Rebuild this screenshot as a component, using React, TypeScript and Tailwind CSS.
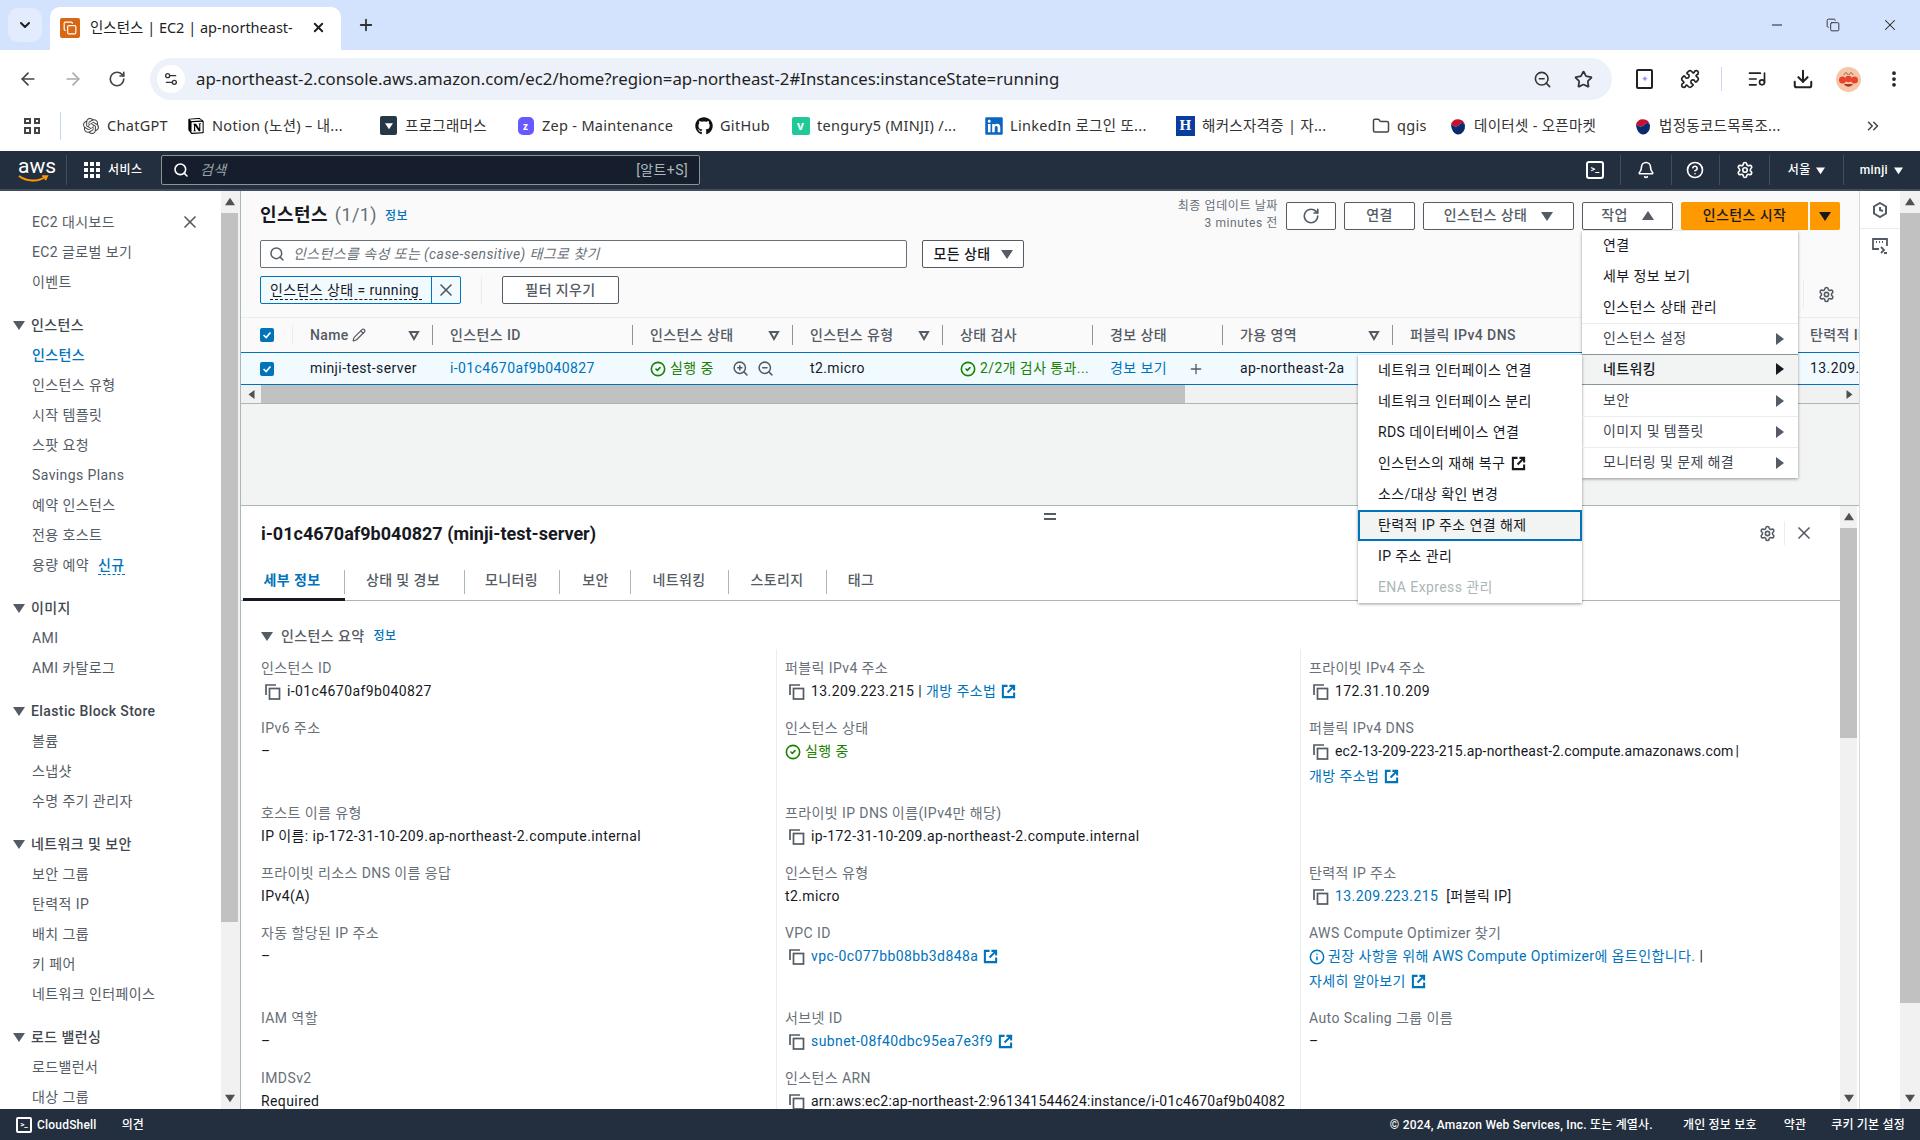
import { ReactNode } from "react";
import {
  ArrowLeft,
  ArrowRight,
  Bell,
  ChevronDown,
  ChevronsRight,
  CircleCheck,
  CircleHelp,
  Copy,
  Download,
  Folder,
  Info,
  ListMusic,
  Minus,
  MoreVertical,
  Pencil,
  Plus,
  Puzzle,
  RotateCw,
  Search,
  Settings,
  Settings2,
  Star,
  X,
  ZoomIn,
  ZoomOut,
} from "lucide-react";
import { FaGithub, FaLinkedin } from "react-icons/fa";
import { SiNotion, SiOpenai } from "react-icons/si";

const ui = "font-['Roboto','Noto_Sans_CJK_KR',sans-serif] tracking-[0.4px]";
const chromeFont = "font-['Noto_Sans','Noto_Sans_CJK_KR',sans-serif]";

function Tri({ dir = "down", className = "" }: { dir?: "down" | "up" | "left" | "right"; className?: string }) {
  const pts = {
    down: "0,2 12,2 6,11",
    up: "0,10 12,10 6,1",
    left: "10,0 10,12 2,6",
    right: "2,0 2,12 10,6",
  }[dir];
  return (
    <svg viewBox="0 0 12 12" className={className} fill="currentColor">
      <polygon points={pts} />
    </svg>
  );
}

function FilterTri() {
  return (
    <svg viewBox="0 0 12 12" className="w-3 h-3 text-[#545b64]" fill="none" stroke="currentColor" strokeWidth="2">
      <polygon points="2,3 10,3 6,10" />
    </svg>
  );
}

function CopyIcon() {
  return (
    <svg viewBox="0 0 16 16" className="w-4 h-4 shrink-0 text-[#545b64]" fill="none" stroke="currentColor" strokeWidth="1.7">
      <path d="M1 11V1h10" />
      <rect x="4.5" y="4.5" width="10" height="10.5" />
    </svg>
  );
}

function ExtIcon({ className = "text-[#0073bb]" }: { className?: string }) {
  return (
    <svg viewBox="0 0 16 16" className={`w-[15px] h-[15px] inline-block shrink-0 ${className}`} fill="none" stroke="currentColor" strokeWidth="2.2">
      <path d="M7 2H2v12h12V9" />
      <path d="M9 2h5v5M14 2L7 9" />
    </svg>
  );
}

function Check({ size = "w-4 h-4" }: { size?: string }) {
  return <CircleCheck className={`${size} shrink-0 text-[#1d8102]`} strokeWidth={2.4} />;
}

function Flag() {
  return (
    <svg viewBox="0 0 16 18" className="w-4 h-[18px]">
      <ellipse cx="8" cy="9" rx="8" ry="9" fill="#fff" />
      <path d="M1 7a7.500 8 0 0 1 14 1c-2-3-5-2-6 0s-6 2-8-1z" fill="#c8102e" />
      <path d="M1 7c2 3 7 3 8 1s4-3 6 0a7 8.500 0 0 1-7 9.500C4 17.500 1 12 1 7z" fill="#0b2a6b" />
    </svg>
  );
}

function Avatar() {
  return (
    <svg viewBox="0 0 25 25" className="w-[25px] h-[25px]">
      <circle cx="12.500" cy="12.500" r="12.500" fill="#f5c6a8" />
      <path d="M8 8c1-3 3-3 4 0M13 8c1-3 3-3 4 0" fill="none" stroke="#7a4a35" strokeWidth="0.800" />
      <circle cx="6.500" cy="13" r="3.500" fill="#e8432b" />
      <circle cx="18.500" cy="13" r="3.500" fill="#e8432b" />
      <circle cx="12.500" cy="12" r="3.200" fill="#e8432b" />
      <path d="M8 17c2 3.500 7 3.500 9 0z" fill="#b5382a" />
    </svg>
  );
}

const bookmarks: { w: string; icon: ReactNode; text: string }[] = [
  { w: "w-[105px]", icon: <SiOpenai className="w-4 h-4 text-[#444]" />, text: "ChatGPT" },
  { w: "w-[193px]", icon: <SiNotion className="w-4 h-4 text-black" />, text: "Notion (노션) – 내..." },
  {
    w: "w-[137px]",
    icon: (
      <span className="w-[17px] h-[19px] rounded-[2px] bg-[#263747] flex items-center justify-center">
        <Tri dir="down" className="w-2 h-2 text-white" />
      </span>
    ),
    text: "프로그래머스",
  },
  {
    w: "w-[178px]",
    icon: (
      <span className="w-4 h-[18px] rounded-[5px] bg-[#6758ff] flex items-center justify-center text-white text-[10px] font-bold leading-none">
        z
      </span>
    ),
    text: "Zep - Maintenance",
  },
  { w: "w-[97px]", icon: <FaGithub className="w-[18px] h-[18px] text-[#111]" />, text: "GitHub" },
  {
    w: "w-[193px]",
    icon: (
      <span className="w-[18px] h-[18px] rounded-[2px] bg-[#20c997] flex items-center justify-center text-white text-[12px] font-bold leading-none">
        v
      </span>
    ),
    text: "tengury5 (MINJI) /...",
  },
  { w: "w-[192px]", icon: <FaLinkedin className="w-[18px] h-[20px] text-[#0a66c2]" />, text: "LinkedIn 로그인 또..." },
  {
    w: "w-[195px]",
    icon: (
      <span className="w-[19px] h-[20px] bg-[#0b3d9f] flex items-center justify-center text-white text-[15px] font-bold leading-none font-['Liberation_Serif',serif]">
        H
      </span>
    ),
    text: "해커스자격증 | 자...",
  },
  { w: "w-[77px]", icon: <Folder className="w-[18px] h-[18px] text-[#444]" />, text: "qgis" },
  { w: "w-[185px]", icon: <Flag />, text: "데이터셋 - 오픈마켓" },
  { w: "w-[230px]", icon: <Flag />, text: "법정동코드목록조..." },
];

function ChromeBar() {
  return (
    <div className={`${chromeFont} text-[#3c4043]`}>
      <div className="h-[50px] bg-[#d3e3fd] flex items-end relative">
        <div className="ml-2 mb-2 w-[34px] h-[34px] rounded-[10px] bg-[#e3ecfd] flex items-center justify-center">
          <ChevronDown className="w-4 h-4 text-[#1f1f1f]" strokeWidth={3} />
        </div>
        <div className="ml-2 w-[291px] h-[43px] bg-white rounded-t-[10px] flex items-center pl-[10px] pb-[2px]">
          <span className="w-5 h-5 bg-[#d86613] rounded-[2px] flex items-center justify-center">
            <Copy className="w-[14px] h-[14px] text-white" />
          </span>
          <span className="ml-[10px] w-[208px] overflow-hidden whitespace-nowrap text-[14.500px] text-[#1f1f1f]">
            인스턴스 | EC2 | ap-northeast-
          </span>
          <X className="ml-[13px] w-[15px] h-[15px] text-[#1f1f1f]" strokeWidth={3} />
        </div>
        <Plus className="ml-4 mb-[16px] w-[18px] h-[18px] text-[#333]" strokeWidth={2.4} />
        <div className="ml-auto mb-[16px] flex items-center gap-[41px] pr-[21px] text-[#222]">
          <Minus className="w-4 h-4" strokeWidth={1.5} />
          <Copy className="w-[14px] h-[16px]" strokeWidth={1.5} />
          <X className="w-[18px] h-[18px]" strokeWidth={1.4} />
        </div>
      </div>
      <div className="h-[53px] bg-white rounded-t-[10px] -mt-px flex items-start pt-[9px]">
        <div className="w-[150px] h-[42px] flex items-center pl-[18px] gap-[25px]">
          <ArrowLeft className="w-5 h-5 text-[#444]" />
          <ArrowRight className="w-5 h-5 text-[#aaa]" />
          <RotateCw className="w-[18px] h-[18px] text-[#444]" strokeWidth={2.2} />
        </div>
        <div className="w-[1462px] h-[42px] rounded-full bg-[#edf2fa] flex items-center pl-[7px] pr-[19px]">
          <span className="w-7 h-7 bg-white rounded-full flex items-center justify-center">
            <Settings2 className="w-4 h-4 text-[#333]" />
          </span>
          <span className="ml-[11px] text-[16.800px] text-[#1f1f1f] whitespace-nowrap">
            ap-northeast-2.console.aws.amazon.com/ec2/home?region=ap-northeast-2#Instances:instanceState=running
          </span>
          <div className="ml-auto flex items-center gap-[22px] text-[#333]">
            <ZoomOut className="w-[19px] h-[19px]" />
            <Star className="w-[19px] h-[19px]" strokeWidth={2.2} />
          </div>
        </div>
        <div className="h-[42px] flex items-center pl-[24px] text-[#222]">
          <span className="w-[17px] h-[20px] border-2 border-[#222] rounded-[2px] bg-white flex items-center justify-center text-[9px] text-[#a78bfa]">
            ✦
          </span>
          <Puzzle className="ml-[27px] w-5 h-5" strokeWidth={2} />
          <span className="ml-[21px] w-px h-6 bg-[#c7d7f0]" />
          <ListMusic className="ml-[25px] w-5 h-5" />
          <Download className="ml-[25px] w-[22px] h-[22px]" strokeWidth={2.2} />
          <span className="ml-[22px]">
            <Avatar />
          </span>
          <MoreVertical className="ml-[23px] w-5 h-5" strokeWidth={2.5} />
        </div>
      </div>
      <div className="h-[49px] bg-white flex items-center pl-6 pb-[2px] text-[14.500px] tracking-[0.3px] text-[#333]">
        <div className="w-[36px]">
          <div className="w-4 h-4 grid grid-cols-2 gap-[3px]">
            <span className="border-2 border-[#444]" />
            <span className="border-2 border-[#444]" />
            <span className="border-2 border-[#444]" />
            <span className="border-2 border-[#444]" />
          </div>
        </div>
        <span className="w-px h-7 bg-[#c7d7f0] mr-[20px]" />
        {bookmarks.map((b) => (
          <div key={b.text} className={`${b.w} flex items-center shrink-0`}>
            <span className="w-[19px] flex items-center justify-center shrink-0">{b.icon}</span>
            <span className="ml-[7px] whitespace-nowrap">{b.text}</span>
          </div>
        ))}
        <ChevronsRight className="w-[18px] h-[18px] ml-[1px] text-[#444]" />
      </div>
    </div>
  );
}

function NavBar() {
  return (
    <div className={`${ui} h-10 bg-[#232f3e] border-b-[2px] border-[#414d5c] flex items-center text-white shrink-0`}>
      <div className="w-[66px] pl-[18px] h-full flex flex-col justify-center">
        <span className="text-[21px] font-normal leading-[17px] tracking-normal">aws</span>
        <svg viewBox="0 0 32 8" className="w-[31px] h-[8px] text-[#ff9900]" fill="none" stroke="currentColor" strokeWidth="2">
          <path d="M1 1c8 6 20 6 27 1M25 1h5l-2 4" />
        </svg>
      </div>
      <span className="w-px h-[30px] bg-[#414d5c]" />
      <div className="ml-[17px] w-4 h-4 grid grid-cols-3 gap-[2px]">
        {Array.from({ length: 9 }).map((_, i) => (
          <span key={i} className="bg-white" />
        ))}
      </div>
      <span className="ml-2 w-[53px] text-[12px] font-medium">서비스</span>
      <div className="w-[539px] h-[30px] bg-[#161e2d] border border-[#879596] rounded-[2px] flex items-center px-[11px]">
        <Search className="w-4 h-4 text-white" strokeWidth={2.4} />
        <span className="ml-[11px] text-[14px] italic text-[#95a5a6]">검색</span>
        <span className="ml-auto text-[14px] text-[#aab7b8]">[알트+S]</span>
      </div>
      <div className="ml-auto flex items-center h-full pr-[17px] text-[12px] font-medium">
        <span className="w-[18px] h-[18px] border-2 border-white rounded-[3px] flex items-center justify-center text-[9px] font-bold tracking-normal">&gt;_</span>
        <span className="ml-4 w-px h-[30px] bg-[#414d5c]" />
        <Bell className="ml-[16px] w-[18px] h-[18px]" strokeWidth={2.2} />
        <span className="ml-4 w-px h-[30px] bg-[#414d5c]" />
        <CircleHelp className="ml-[14px] w-[18px] h-[18px]" strokeWidth={2.2} />
        <span className="ml-[15px] w-px h-[30px] bg-[#414d5c]" />
        <Settings className="ml-[16px] w-[18px] h-[18px]" strokeWidth={2.2} />
        <span className="ml-[15px] w-px h-[30px] bg-[#414d5c]" />
        <span className="ml-[18px]">서울</span>
        <Tri className="ml-[5px] w-[9px] h-[9px]" />
        <span className="ml-[18px] w-px h-[30px] bg-[#414d5c]" />
        <span className="ml-[16px]">minji</span>
        <Tri className="ml-[6px] w-[9px] h-[9px]" />
      </div>
    </div>
  );
}

function VScroll({ w, thumbH }: { w: string; thumbH: string }) {
  return (
    <div className={`${w} shrink-0 bg-[#f1f1f1] flex flex-col overflow-hidden`}>
      <div className="h-[22px] flex items-center justify-center shrink-0">
        <Tri dir="up" className="w-[10px] h-[10px] text-[#505050]" />
      </div>
      <div className={`${thumbH} bg-[#c1c1c1] shrink-0`} />
      <div className="flex-1" />
      <div className="h-[22px] flex items-center justify-center shrink-0">
        <Tri dir="down" className="w-[10px] h-[10px] text-[#505050]" />
      </div>
    </div>
  );
}

const navGroups: { head?: string; items: string[] }[] = [
  { items: ["EC2 대시보드", "EC2 글로벌 보기", "이벤트"] },
  { head: "인스턴스", items: ["인스턴스", "인스턴스 유형", "시작 템플릿", "스팟 요청", "Savings Plans", "예약 인스턴스", "전용 호스트", "용량 예약"] },
  { head: "이미지", items: ["AMI", "AMI 카탈로그"] },
  { head: "Elastic Block Store", items: ["볼륨", "스냅샷", "수명 주기 관리자"] },
  { head: "네트워크 및 보안", items: ["보안 그룹", "탄력적 IP", "배치 그룹", "키 페어", "네트워크 인터페이스"] },
  { head: "로드 밸런싱", items: ["로드밸런서", "대상 그룹"] },
];

function Sidebar() {
  return (
    <div className="w-[221px] shrink-0 pt-4 overflow-hidden bg-white relative text-[14px] text-[#545b64]">
      <X className="absolute left-[180px] top-[21px] w-5 h-5 text-[#545b64]" strokeWidth={2} />
      {navGroups.map((g, gi) => (
        <div key={gi} className={gi ? "mt-[13px]" : ""}>
          {g.head && (
            <div className="h-[30px] flex items-center pl-[13px] font-medium text-[#414750]">
              <Tri className="w-[12px] h-[12px] mr-[6px] text-[#545b64]" />
              {g.head}
            </div>
          )}
          {g.items.map((it, i) => (
            <div
              key={it}
              className={`h-[30px] flex items-center pl-8 ${g.head === "인스턴스" && i === 0 ? "text-[#0073bb] font-medium" : ""}`}
            >
              {it}
              {it === "용량 예약" && (
                <span className="ml-[9px] text-[#0073bb] font-medium border-b border-dashed border-[#0073bb] leading-[18px]">신규</span>
              )}
            </div>
          ))}
        </div>
      ))}
    </div>
  );
}

function Btn({ children, className = "" }: { children: ReactNode; className?: string }) {
  return (
    <div className={`h-[28px] flex items-center justify-center bg-white border border-[#545b64] rounded-[2px] text-[14px] font-medium text-[#545b64] ${className}`}>
      {children}
    </div>
  );
}

const menuItems = ["연결", "세부 정보 보기", "인스턴스 상태 관리"];
const menuSubs = ["인스턴스 설정", "네트워킹", "보안", "이미지 및 템플릿", "모니터링 및 문제 해결"];

function NetworkSubmenu() {
  const items = [
    "네트워크 인터페이스 연결",
    "네트워크 인터페이스 분리",
    "RDS 데이터베이스 연결",
    "인스턴스의 재해 복구",
    "소스/대상 확인 변경",
    "탄력적 IP 주소 연결 해제",
    "IP 주소 관리",
    "ENA Express 관리",
  ];
  return (
    <div className="absolute right-full top-0 w-[224px] bg-white shadow-[0_1px_3px_rgba(0,0,0,0.4)] font-normal text-[#16191f]">
      {items.map((it, i) => (
        <div
          key={it}
          className={`h-[31px] flex items-center whitespace-nowrap ${
            i === 5 ? "bg-[#f2f3f3] border-2 border-[#0073bb] pl-[18px]" : "pl-5"
          } ${i === 7 ? "text-[#aab7b8]" : ""}`}
        >
          {it}
          {i === 3 && <ExtIcon className="ml-[6px] text-[#16191f]" />}
        </div>
      ))}
    </div>
  );
}

function ActionsMenu() {
  return (
    <div className="absolute left-0 top-[29px] w-[216px] bg-white shadow-[0_1px_3px_rgba(0,0,0,0.4)] text-[14px] text-[#16191f] z-20">
      {menuItems.map((m, i) => (
        <div key={m} className={`${i ? "h-[31px]" : "h-[30px]"} flex items-center pl-[21px] font-normal whitespace-nowrap`}>
          {m}
        </div>
      ))}
      {menuSubs.map((m, i) => {
        const active = i === 1;
        return (
          <div
            key={m}
            className={`h-[31px] flex items-center pl-[21px] pr-[12px] relative border-t whitespace-nowrap ${
              active
                ? "bg-[#f2f3f3] border-[#879596] border-b font-medium"
                : `font-normal text-[#414750] ${i === 2 ? "border-transparent" : "border-[#eaeded]"}`
            }`}
          >
            {m}
            <Tri dir="right" className={`ml-auto w-[12px] h-[12px] ${active ? "text-[#16191f]" : "text-[#545b64]"}`} />
            {active && <NetworkSubmenu />}
          </div>
        );
      })}
    </div>
  );
}

function Col({ w, label, filter, extra }: { w: string; label: string; filter?: boolean; extra?: ReactNode }) {
  return (
    <div className={`${w} shrink-0 h-full flex items-center relative pl-[17px] pr-[13px] font-medium text-[#545b64] whitespace-nowrap`}>
      {label}
      {extra}
      {filter && (
        <span className="ml-auto">
          <FilterTri />
        </span>
      )}
      <span className="absolute right-0 top-[7px] h-5 w-px bg-[#879596]" />
    </div>
  );
}

function Cell({ w, children, className = "" }: { w: string; children?: ReactNode; className?: string }) {
  return <div className={`${w} shrink-0 h-full flex items-center pl-[17px] whitespace-nowrap overflow-hidden ${className}`}>{children}</div>;
}

function CheckBox() {
  return (
    <span className="w-[14px] h-[14px] bg-[#0073bb] rounded-[2px] flex items-center justify-center">
      <svg viewBox="0 0 14 14" className="w-3 h-3" fill="none" stroke="#fff" strokeWidth="2">
        <path d="M3 7l3 3 5-6" />
      </svg>
    </span>
  );
}

function TopPanel() {
  return (
    <div className="h-[315px] shrink-0 bg-[#f2f3f3] flex flex-col border-b border-[#aab7b8]">
      <div className="h-[126px] shrink-0 bg-[#fafafa] px-[19px] pt-[11px]">
        <div className="h-[27px] flex items-center">
          <span className="text-[18px] font-bold text-[#16191f] mb-[2px]">인스턴스</span>
          <span className="ml-[7px] text-[18px] text-[#687078] mb-[2px]">(1/1)</span>
          <span className="ml-2 text-[12px] font-medium text-[#0073bb]">정보</span>
          <div className="ml-auto flex items-center">
            <div className="text-[12px] leading-[17px] tracking-[0.6px] text-[#687078] text-right mr-2 -mt-[1px]">
              최종 업데이트 날짜
              <br />3 minutes 전
            </div>
            <Btn className="w-[50px]">
              <RotateCw className="w-[18px] h-[18px]" strokeWidth={2.2} />
            </Btn>
            <Btn className="w-[71px] ml-2">연결</Btn>
            <Btn className="w-[151px] ml-2 gap-[14px]">
              인스턴스 상태 <Tri className="w-[12px] h-[12px]" />
            </Btn>
            <div className="relative ml-2">
              <Btn className="w-[91px] gap-[14px]">
                작업 <Tri dir="up" className="w-[12px] h-[12px]" />
              </Btn>
              <ActionsMenu />
            </div>
            <div className="ml-2 w-[127px] h-[28px] bg-[#ff9900] rounded-l-[2px] flex items-center justify-center text-[14px] font-medium text-[#16191f]">
              인스턴스 시작
            </div>
            <div className="ml-[2px] w-[30px] h-[28px] bg-[#ff9900] rounded-r-[2px] flex items-center justify-center">
              <Tri className="w-[12px] h-[12px] text-[#16191f]" />
            </div>
          </div>
        </div>
        <div className="mt-[11px] h-7 flex items-center">
          <div className="w-[647px] h-7 bg-white border border-[#687078] rounded-[2px] flex items-center pl-2">
            <Search className="w-4 h-4 text-[#545b64]" strokeWidth={2.2} />
            <span className="ml-2 text-[14px] italic text-[#687078]">인스턴스를 속성 또는 (case-sensitive) 태그로 찾기</span>
          </div>
          <Btn className="ml-[15px] w-[102px] gap-[10px] text-[#16191f]">
            모든 상태 <Tri className="w-[12px] h-[12px] text-[#545b64]" />
          </Btn>
        </div>
        <div className="mt-2 h-7 flex items-center">
          <div className="w-[201px] h-7 bg-[#f1faff] border border-[#0073bb] rounded-[2px] flex items-center">
            <span className="ml-[9px] w-[152px] text-[14px] text-[#16191f] border-b border-dashed border-[#16191f] leading-[18px] whitespace-nowrap">인스턴스 상태 = running</span>
            <span className="ml-[9px] h-full border-l border-[#0073bb] flex-1 flex items-center justify-center">
              <X className="w-5 h-5 text-[#545b64]" strokeWidth={2} />
            </span>
          </div>
          <span className="ml-5 w-px h-7 bg-[#eaeded]" />
          <Btn className="ml-5 w-[117px]">필터 지우기</Btn>
          <span className="ml-auto w-px h-7 bg-[#eaeded] mt-[8px]" />
          <Settings className="ml-[14px] mr-[5px] mt-[8px] w-[17px] h-[17px] text-[#545b64]" strokeWidth={2.2} />
        </div>
      </div>
      <div className="overflow-hidden">
        <div className="w-[1800px] h-[35px] bg-[#fafafa] border-t border-[#eaeded] flex items-center text-[14px]">
          <div className="w-[52px] h-full pl-[19px] flex items-center relative shrink-0">
            <CheckBox />
            <span className="absolute right-0 top-[7px] h-5 w-px bg-[#eaeded]" />
          </div>
          <Col w="w-[140px]" label="Name" filter extra={<Pencil className="ml-[3px] w-[14px] h-[14px]" />} />
          <Col w="w-[200px]" label="인스턴스 ID" />
          <Col w="w-[160px]" label="인스턴스 상태" filter />
          <Col w="w-[150px]" label="인스턴스 유형" filter />
          <Col w="w-[150px]" label="상태 검사" />
          <Col w="w-[130px]" label="경보 상태" />
          <Col w="w-[170px]" label="가용 영역" filter />
          <Col w="w-[400px]" label="퍼블릭 IPv4 DNS" filter />
          <Col w="w-[200px]" label="탄력적 IP" />
        </div>
        <div className="w-[1800px] h-[33px] bg-[#f1faff] border-y border-[#0073bb] flex items-center text-[14px] text-[#16191f]">
          <div className="w-[52px] h-full pl-[19px] flex items-center shrink-0">
            <CheckBox />
          </div>
          <Cell w="w-[140px]">minji-test-server</Cell>
          <Cell w="w-[200px]" className="text-[#0073bb]">i-01c4670af9b040827</Cell>
          <Cell w="w-[160px]" className="text-[#1d8102]">
            <Check />
            <span className="ml-1">실행 중</span>
            <ZoomIn className="ml-[18px] w-[17px] h-[17px] text-[#545b64]" strokeWidth={2.2} />
            <ZoomOut className="ml-2 w-[17px] h-[17px] text-[#545b64]" strokeWidth={2.2} />
          </Cell>
          <Cell w="w-[150px]">t2.micro</Cell>
          <Cell w="w-[150px]" className="text-[#1d8102]">
            <Check />
            <span className="ml-1">2/2개 검사 통과...</span>
          </Cell>
          <Cell w="w-[130px]">
            <span className="text-[#0073bb]">경보 보기</span>
            <Plus className="ml-[21px] w-[16px] h-[16px] text-[#545b64]" strokeWidth={2} />
          </Cell>
          <Cell w="w-[170px]">ap-northeast-2a</Cell>
          <Cell w="w-[400px]" />
          <Cell w="w-[200px]">13.209.223.215</Cell>
        </div>
      </div>
      <div className="h-[18px] bg-[#f1f1f1] flex items-center border-b border-[#aab7b8] shrink-0 box-content">
        <div className="w-[20px] flex items-center justify-center">
          <Tri dir="left" className="w-[9px] h-[9px] text-[#505050]" />
        </div>
        <div className="w-[924px] h-full bg-[#c1c1c1]" />
        <div className="ml-auto w-[20px] flex items-center justify-center">
          <Tri dir="right" className="w-[9px] h-[9px] text-[#505050]" />
        </div>
      </div>
    </div>
  );
}

function A({ children, ext }: { children: ReactNode; ext?: boolean }) {
  return (
    <span className="text-[#0073bb] inline-flex items-center gap-[5px] whitespace-nowrap">
      {children}
      {ext && <ExtIcon />}
    </span>
  );
}

function Val({ children, copy, pad, className = "" }: { children: ReactNode; copy?: boolean; pad?: boolean; className?: string }) {
  return (
    <div className={`h-[25px] flex items-center whitespace-nowrap text-[#16191f] ${pad ? "pl-[4px]" : ""} ${className}`}>
      {copy && <span className="mr-[6px]"><CopyIcon /></span>}
      {children}
    </div>
  );
}

function Field({ label, children, col }: { label: string; children: ReactNode; col: number }) {
  return (
    <div className={`pt-2 pb-[5px] ${col === 0 ? "pl-5" : "pl-2 border-l border-[#eaeded]"}`}>
      <div className="h-[22px] flex items-center text-[#687078] whitespace-nowrap">{label}</div>
      {children}
    </div>
  );
}

const detailTabs = [
  { t: "세부 정보", w: "w-[102px]", pr: "pr-[4px]" },
  { t: "상태 및 경보", w: "w-[120px]", pr: "pr-[4px]" },
  { t: "모니터링", w: "w-[95px]", pr: "pr-[2px]" },
  { t: "보안", w: "w-[71px]", pr: "" },
  { t: "네트워킹", w: "w-[98px]", pr: "pr-[2px]" },
  { t: "스토리지", w: "w-[98px]", pr: "pr-[2px]" },
  { t: "태그", w: "w-[70px]", pr: "pr-[2px]" },
];

function DetailPanel() {
  return (
    <div className="flex-1 flex min-h-0 bg-white relative">
      <div className="absolute left-[803px] top-[7px] w-3 flex flex-col gap-[3px]">
        <span className="h-[2px] bg-[#545b64]" />
        <span className="h-[2px] bg-[#545b64]" />
      </div>
      <div className="flex-1 min-w-0 overflow-hidden">
        <div className="h-[54px] flex items-center pl-5 pr-[26px]">
          <span className="text-[18px] font-bold text-[#16191f] tracking-normal">i-01c4670af9b040827 (minji-test-server)</span>
          <Settings className="ml-auto w-[17px] h-[17px] text-[#545b64]" strokeWidth={2.2} />
          <span className="mx-2 w-px h-6 bg-[#eaeded]" />
          <X className="ml-[1px] w-5 h-5 text-[#545b64]" strokeWidth={2} />
        </div>
        <div className="h-[41px] flex border-b border-[#aab7b8] pl-[2px] text-[14px]">
          {detailTabs.map((t, i) => (
            <div key={t.t} className={`${t.w} ${t.pr} h-full flex items-center justify-center relative shrink-0 ${i === 0 ? "text-[#0073bb] font-bold" : "font-medium text-[#545b64]"}`}>
              {t.t}
              {i === 0 && <span className="absolute left-0 right-0 -bottom-px h-[3px] bg-[#16191f]" />}
              {i < 6 && <span className="absolute right-0 top-[10px] h-[24px] w-px bg-[#aab7b8]" />}
            </div>
          ))}
        </div>
        <div className="mt-[25px] h-5 pl-5 flex items-center text-[14px]">
          <Tri className="w-[12px] h-[12px] text-[#545b64] mr-[8px]" />
          <span className="font-medium text-[#545b64]">인스턴스 요약</span>
          <span className="ml-[9px] text-[12px] font-medium text-[#0073bb]">정보</span>
        </div>
        <div className="mt-[3px] grid grid-cols-[535px_524px_1fr] text-[14px]">
          <Field col={0} label="인스턴스 ID"><Val copy pad>i-01c4670af9b040827</Val></Field>
          <Field col={1} label="퍼블릭 IPv4 주소"><Val copy pad>13.209.223.215 <span className="mx-1">|</span> <A ext>개방 주소법</A></Val></Field>
          <Field col={2} label="프라이빗 IPv4 주소"><Val copy pad>172.31.10.209</Val></Field>

          <Field col={0} label="IPv6 주소"><Val>–</Val></Field>
          <Field col={1} label="인스턴스 상태"><Val><span className="text-[#1d8102] inline-flex items-center gap-1"><Check />실행 중</span></Val></Field>
          <Field col={2} label="퍼블릭 IPv4 DNS">
            <Val copy pad className="tracking-[0.18px]">ec2-13-209-223-215.ap-northeast-2.compute.amazonaws.com <span className="ml-[2px]">|</span></Val>
            <Val><A ext>개방 주소법</A></Val>
          </Field>

          <Field col={0} label="호스트 이름 유형"><Val>IP 이름: ip-172-31-10-209.ap-northeast-2.compute.internal</Val></Field>
          <Field col={1} label="프라이빗 IP DNS 이름(IPv4만 해당)"><Val copy pad>ip-172-31-10-209.ap-northeast-2.compute.internal</Val></Field>
          <Field col={2} label=""><Val>{""}</Val></Field>

          <Field col={0} label="프라이빗 리소스 DNS 이름 응답"><Val>IPv4(A)</Val></Field>
          <Field col={1} label="인스턴스 유형"><Val>t2.micro</Val></Field>
          <Field col={2} label="탄력적 IP 주소"><Val copy pad><A>13.209.223.215</A><span className="ml-2">[퍼블릭 IP]</span></Val></Field>

          <Field col={0} label="자동 할당된 IP 주소"><Val>–</Val></Field>
          <Field col={1} label="VPC ID"><Val copy pad><A ext>vpc-0c077bb08bb3d848a</A></Val></Field>
          <Field col={2} label="AWS Compute Optimizer 찾기">
            <Val>
              <Info className="w-4 h-4 text-[#0073bb] mr-[3px]" strokeWidth={2.2} />
              <A>권장 사항을 위해 AWS Compute Optimizer에 옵트인합니다.</A>
              <span className="ml-1">|</span>
            </Val>
            <Val><A ext>자세히 알아보기</A></Val>
          </Field>

          <Field col={0} label="IAM 역할"><Val>–</Val></Field>
          <Field col={1} label="서브넷 ID"><Val copy pad><A ext>subnet-08f40dbc95ea7e3f9</A></Val></Field>
          <Field col={2} label="Auto Scaling 그룹 이름"><Val>–</Val></Field>

          <Field col={0} label="IMDSv2"><Val>Required</Val></Field>
          <Field col={1} label="인스턴스 ARN"><Val copy pad className="tracking-[0.23px]">arn:aws:ec2:ap-northeast-2:961341544624:instance/i-01c4670af9b04082</Val></Field>
          <Field col={2} label=""><Val>{""}</Val></Field>
        </div>
      </div>
      <VScroll w="w-[17px]" thumbH="h-[210px]" />
      <div className="w-[2px] shrink-0" />
    </div>
  );
}

function Rail() {
  return (
    <div className="w-[41px] shrink-0 bg-white border-l border-[#d5dbdb] flex flex-col items-center">
      <div className="h-[38px] w-full border-b border-[#eaeded] flex items-center justify-center">
        <svg viewBox="0 0 16 16" className="w-4 h-4 text-[#545b64]" fill="none" stroke="currentColor" strokeWidth="2">
          <path d="M8 1l6 3.500v7L8 15l-6-3.500v-7z" />
          <path d="M8 5v3l3 1" />
        </svg>
      </div>
      <div className="h-[34px] flex items-center justify-center">
        <svg viewBox="0 0 16 16" className="w-4 h-4 text-[#545b64]" fill="none" stroke="currentColor" strokeWidth="1.8">
          <path d="M7 11H1V1h14v7" />
          <path d="M4 4h1M7 4h1M10 4h1M9 9l3 3-3 3M12 15h3" />
        </svg>
      </div>
    </div>
  );
}

function Footer() {
  return (
    <div className="font-['Roboto','Noto_Sans_CJK_KR',sans-serif] tracking-[0.2px] h-[31px] shrink-0 bg-[#232f3e] flex items-center text-white text-[12px] font-medium pl-4 pr-[15px]">
      <span className="w-4 h-4 border-2 border-white rounded-[2px] flex items-center justify-center text-[8px] font-bold tracking-normal">&gt;_</span>
      <span className="ml-[5px]">CloudShell</span>
      <span className="ml-[25px]">의견</span>
      <div className="ml-auto flex items-center">
        <span>© 2024, Amazon Web Services, Inc. 또는 계열사.</span>
        <span className="ml-[30px]">개인 정보 보호</span>
        <span className="ml-[27px]">약관</span>
        <span className="ml-[25px]">쿠키 기본 설정</span>
      </div>
    </div>
  );
}

export default function App() {
  return (
    <div className="w-[1920px] h-[1140px] flex flex-col overflow-hidden bg-white">
      <ChromeBar />
      <NavBar />
      <div className={`${ui} flex-1 min-h-0 flex`}>
        <Sidebar />
        <VScroll w="w-[17px]" thumbH="h-[709px]" />
        <div className="w-[2px] bg-[#f1f1f1] shrink-0" />
        <div className="flex-1 min-w-0 flex flex-col border-l border-[#aab7b8]">
          <TopPanel />
          <DetailPanel />
        </div>
        <Rail />
        <VScroll w="w-[20px]" thumbH="h-[790px]" />
      </div>
      <Footer />
    </div>
  );
}
